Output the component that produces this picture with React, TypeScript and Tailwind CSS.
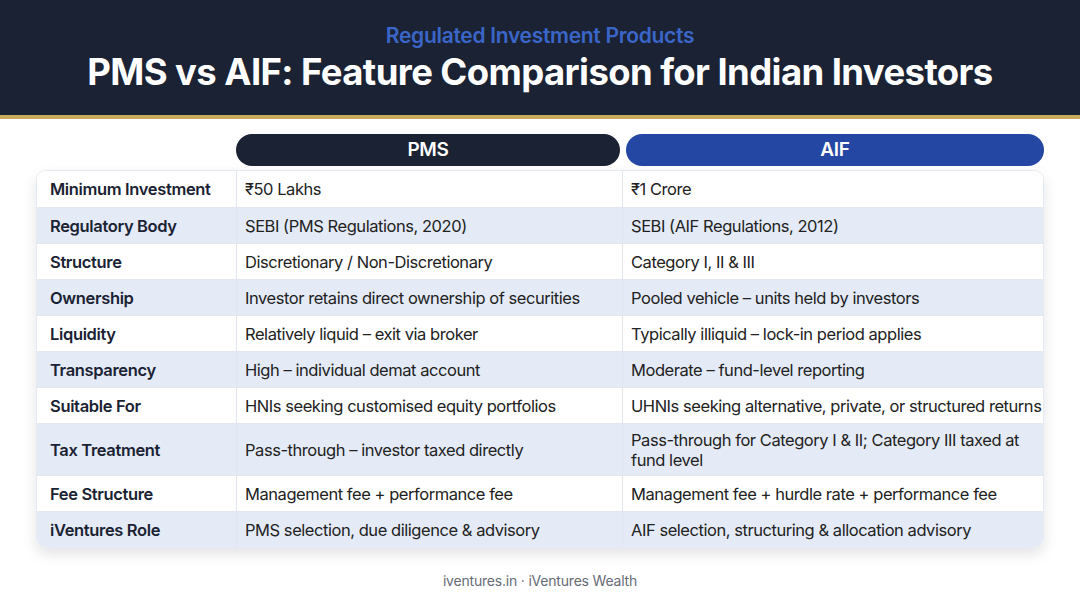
import React from "react";

const rows: [string, string, string][] = [
  ["Minimum Investment", "₹50 Lakhs", "₹1 Crore"],
  ["Regulatory Body", "SEBI (PMS Regulations, 2020)", "SEBI (AIF Regulations, 2012)"],
  ["Structure", "Discretionary / Non-Discretionary", "Category I, II & III"],
  ["Ownership", "Investor retains direct ownership of securities", "Pooled vehicle – units held by investors"],
  ["Liquidity", "Relatively liquid – exit via broker", "Typically illiquid – lock-in period applies"],
  ["Transparency", "High – individual demat account", "Moderate – fund-level reporting"],
  ["Suitable For", "HNIs seeking customised equity portfolios", "UHNIs seeking alternative, private, or structured returns"],
  ["Tax Treatment", "Pass-through – investor taxed directly", "Pass-through for Category I & II; Category III taxed at fund level"],
  ["Fee Structure", "Management fee + performance fee", "Management fee + hurdle rate + performance fee"],
  ["iVentures Role", "PMS selection, due diligence & advisory", "AIF selection, structuring & allocation advisory"],
];

const App = () => {
  return (
    <div className="w-[1080px] h-[603px] bg-white flex flex-col font-['Inter',sans-serif] overflow-hidden">
      {/* header */}
      <div className="h-[115px] bg-[#1a2233] flex flex-col items-center pt-[21px]">
        <div className="text-[21px] leading-[29px] font-semibold text-[#3b66c9] tracking-[-0.3px]">
          Regulated Investment Products
        </div>
        <div className="text-[36.5px] leading-[44px] font-bold text-white tracking-[-0.6px]">
          PMS vs AIF: Feature Comparison for Indian Investors
        </div>
      </div>
      <div className="h-[4px] bg-[#c9a95c]" />

      <div className="px-[36px] pt-[15px]">
        {/* column pills */}
        <div className="flex gap-[6px] pl-[200px]">
          <div className="w-[384px] h-[32px] rounded-full bg-[#1a2233] text-white text-[19px] font-semibold flex items-center justify-center tracking-[-0.3px]">
            PMS
          </div>
          <div className="flex-1 h-[32px] rounded-full bg-[#2447a3] text-white text-[19px] font-semibold flex items-center justify-center tracking-[-0.3px]">
            AIF
          </div>
        </div>

        {/* table */}
        <div className="mt-[4px] rounded-[10px] border border-[#e5e9f0] shadow-[0_6px_14px_rgba(15,23,42,0.12)] overflow-hidden">
          {rows.map(([label, pms, aif], i) => (
            <div
              key={label}
              className={`flex text-[16.5px] leading-[20px] tracking-[-0.45px] ${i % 2 === 1 ? "bg-[#e4ebf7]" : "bg-white"} ${i === 7 ? "min-h-[52px]" : "h-[36px] whitespace-nowrap"} ${i > 0 ? "border-t border-[#e3e8f0]" : ""}`}
            >
              <div className="w-[200px] shrink-0 pl-[13px] flex items-center font-semibold text-[#1a2233] border-r border-[#e0e5ee] tracking-[-0.35px]">
                {label}
              </div>
              <div className="w-[386px] shrink-0 pl-[8px] flex items-center text-[#222] border-r border-[#e0e5ee]">
                {pms}
              </div>
              <div className="flex-1 pl-[8px] pr-[6px] flex items-center text-[#222]">
                {aif}
              </div>
            </div>
          ))}
        </div>
      </div>

      <div className="mt-[22px] text-center text-[14px] text-[#666b75] tracking-[-0.2px]">
        iventures.in · iVentures Wealth
      </div>
    </div>
  );
};

export default App;
